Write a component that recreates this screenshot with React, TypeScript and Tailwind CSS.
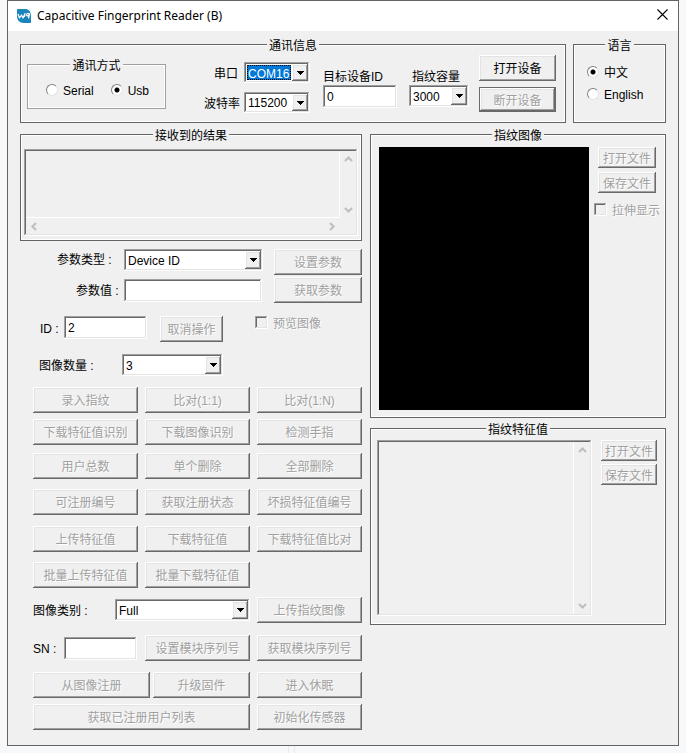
import type { ReactNode } from "react";
import { useState } from "react";
import { clsx } from "clsx";

const RAISED_CLASS =
  "shadow-[inset_-1px_-1px_0_#696969,inset_1px_1px_0_#fff,inset_-2px_-2px_0_#a0a0a0,inset_2px_2px_0_#e3e3e3]";
const SUNKEN_CLASS =
  "shadow-[inset_-1px_-1px_0_#fff,inset_1px_1px_0_#a0a0a0,inset_-2px_-2px_0_#e3e3e3,inset_2px_2px_0_#696969]";
const DISABLED_TEXT_CLASS = "text-[#a0a0a0] [text-shadow:1px_1px_0_#fff]";

type GroupProps = {
  readonly title: string;
  readonly light?: boolean;
  readonly className?: string;
  readonly children: ReactNode;
};

function Group({ title, light, className, children }: GroupProps) {
  return (
    <fieldset
      className={clsx(
        "min-w-0 border shadow-[inset_1px_1px_0_#fff,inset_-1px_-1px_0_#fff]",
        light ? "border-[#a0a0a0]" : "border-[#646464]",
        className,
      )}
    >
      <legend className="mx-auto h-5 bg-[#f0f0f0] px-0.5 pt-1 leading-4">{title}</legend>
      {children}
    </fieldset>
  );
}

type PushButtonProps = {
  readonly children: ReactNode;
  readonly enabled?: boolean;
  readonly className?: string;
};

function PushButton({ children, enabled, className }: PushButtonProps) {
  return (
    <button
      className={clsx(
        "min-w-0 bg-[#f0f0f0] pt-0.5 text-center whitespace-nowrap",
        RAISED_CLASS,
        !enabled && DISABLED_TEXT_CLASS,
        className ?? "h-[26px]",
      )}
      disabled={!enabled}
      type="button"
    >
      {children}
    </button>
  );
}

type ComboProps = {
  readonly id: string;
  readonly options: string[];
  readonly selected?: boolean;
  readonly className?: string;
};

function Combo({ id, options, selected, className }: ComboProps) {
  return (
    <div className={clsx("flex min-w-0 bg-white p-0.5", SUNKEN_CLASS, className ?? "h-[22px]")}>
      <select
        className={clsx(
          "min-w-0 flex-1 appearance-none rounded-none outline-none",
          selected ? "m-px border border-dotted border-black bg-[#0078d7] text-white" : "pt-px pl-0.5",
        )}
        id={id}
      >
        {options.map((option) => (
          <option key={option}>{option}</option>
        ))}
      </select>
      <span
        aria-hidden
        className={clsx("flex w-4 shrink-0 items-center justify-center bg-[#f0f0f0]", RAISED_CLASS)}
      >
        <svg className="h-1 w-[7px]" shapeRendering="crispEdges" viewBox="0 0 7 4">
          <path d="M0 0h7v1h-1v1h-1v1h-1v1h-1v-1h-1v-1h-1v-1h-1z" />
        </svg>
      </span>
    </div>
  );
}

type TextBoxProps = {
  readonly id: string;
  readonly initial?: string;
  readonly className?: string;
};

function TextBox({ id, initial = "", className }: TextBoxProps) {
  return (
    <input
      className={clsx("h-[23px] min-w-0 bg-white px-1 outline-none", SUNKEN_CLASS, className)}
      defaultValue={initial}
      id={id}
      type="text"
    />
  );
}

type RadioProps = {
  readonly name: string;
  readonly label: string;
  readonly checked: boolean;
  readonly onSelect: () => void;
};

function Radio({ name, label, checked, onSelect }: RadioProps) {
  return (
    <label className="flex h-4 items-center gap-[5px]">
      <input
        checked={checked}
        className="-mt-0.5 size-3 shrink-0 appearance-none rounded-full border border-t-[#808080] border-r-[#e3e3e3] border-b-[#e3e3e3] border-l-[#808080] bg-white checked:bg-[radial-gradient(circle,#000_2px,#fff_3px)]"
        name={name}
        onChange={onSelect}
        type="radio"
      />
      {label}
    </label>
  );
}

function CheckBox({ label }: { readonly label: string }) {
  return (
    <label className={clsx("flex h-4 items-center gap-[5px] whitespace-nowrap", DISABLED_TEXT_CLASS)}>
      <input
        className={clsx("-mt-1 size-[13px] shrink-0 appearance-none bg-[#f0f0f0]", SUNKEN_CLASS)}
        disabled
        type="checkbox"
      />
      <span>{label}</span>
    </label>
  );
}

const CHEVRONS = {
  up: "M1 6L4.500 2.500L8 6",
  down: "M1 3L4.500 6.500L8 3",
  left: "M6 1L2.500 4.500L6 8",
  right: "M3 1L6.500 4.500L3 8",
};

function Chevron({ dir }: { readonly dir: keyof typeof CHEVRONS }) {
  return (
    <svg aria-hidden className="size-[9px]" viewBox="0 0 9 9">
      <path d={CHEVRONS[dir]} fill="none" stroke="#bfbfbf" strokeWidth="2.200" />
    </svg>
  );
}

/** Disabled multi-line box with its scroll bars drawn in place. */
function ScrollText({
  label,
  horizontal,
  className,
}: {
  readonly label: string;
  readonly horizontal?: boolean;
  readonly className?: string;
}) {
  return (
    <div className={clsx("flex min-w-0 flex-col p-0.5", SUNKEN_CLASS, className)}>
      <div className="flex min-h-0 flex-1">
        <textarea
          aria-label={label}
          className={clsx(
            "w-0 min-w-0 flex-1 resize-none overflow-hidden border-r border-white",
            horizontal && "border-b",
          )}
          disabled
        />
        <div className="flex w-4 flex-col items-center justify-between py-1">
          <Chevron dir="up" />
          <Chevron dir="down" />
        </div>
      </div>
      {horizontal ? (
        <div className="flex h-4 items-center justify-between pr-5 pl-1">
          <Chevron dir="left" />
          <Chevron dir="right" />
        </div>
      ) : null}
    </div>
  );
}

function Logo() {
  return (
    <svg aria-hidden className="h-[15px] w-[14px]" viewBox="0 0 14 15">
      <path d="M0 1Q0 0 1 0H9Q14 1 14 7V13Q14 14 13 14H6Q0 13 0 7Z" fill="#1b85ba" />
      <path
        d="M1 5L2.500 9L4.500 6L6 9L8 4.500L7.500 8M12.500 5Q10 3.500 9.500 6Q10 7.500 11.500 6.500L12.500 5L11.500 9.500"
        fill="none"
        stroke="#fff"
        strokeLinejoin="round"
        strokeWidth="1.200"
      />
    </svg>
  );
}

const ACTION_ROWS = [
  { className: "mt-[11px]", labels: ["录入指纹", "比对(1:1)", "比对(1:N)"] },
  { className: "mt-1.5", labels: ["下载特征值识别", "下载图像识别", "检测手指"] },
  { className: "mt-2", labels: ["用户总数", "单个删除", "全部删除"] },
  { className: "mt-2.5", labels: ["可注册编号", "获取注册状态", "坏损特征值编号"] },
  { className: "mt-[11px]", labels: ["上传特征值", "下载特征值", "下载特征值比对"] },
  { className: "mt-2.5", labels: ["批量上传特征值", "批量下载特征值"] },
];

function ConnectionGroup() {
  const [mode, setMode] = useState("Usb");

  return (
    <Group className="flex-1" title="通讯信息">
      <div className="flex h-[68px] items-start pr-[9px] pl-1.5">
        <Group className="h-[55px] w-[139px] shrink-0" light title="通讯方式">
          <div className="flex gap-[17px] pt-[9px] pl-[18px]">
            {["Serial", "Usb"].map((item) => (
              <Radio
                checked={mode === item}
                key={item}
                label={item}
                name="mode"
                onSelect={() => {
                  setMode(item);
                }}
              />
            ))}
          </div>
        </Group>
        <div className="mt-2 ml-auto grid grid-cols-[36px_66px] items-center gap-x-1 gap-y-[9px]">
          <label className="pt-0.5 pr-0.5 text-right" htmlFor="port">
            串口
          </label>
          <Combo className="h-[21px]" id="port" options={["COM16"]} selected />
          <label className="pt-0.5 text-right" htmlFor="baud">
            波特率
          </label>
          <Combo className="h-[21px]" id="baud" options={["115200"]} />
        </div>
        <div className="mt-3.5 ml-[13px] flex w-[74px] flex-col">
          <label className="h-[17px] pt-px whitespace-nowrap" htmlFor="target">
            目标设备ID
          </label>
          <TextBox id="target" initial="0" />
        </div>
        <div className="mt-3.5 ml-3 flex w-[60px] flex-col">
          <label className="h-[17px] pt-px pl-[3px] whitespace-nowrap" htmlFor="capacity">
            指纹容量
          </label>
          <Combo id="capacity" options={["3000"]} />
        </div>
        <div className="mt-px ml-2.5 flex w-[77px] flex-col gap-1.5">
          <PushButton enabled>打开设备</PushButton>
          <PushButton className="h-[25px] border border-[#696969]">断开设备</PushButton>
        </div>
      </div>
    </Group>
  );
}

function LanguageGroup() {
  const [language, setLanguage] = useState("中文");

  return (
    <Group className="w-[93px]" title="语言">
      <div className="flex flex-col gap-1.5 pt-[11px] pl-[13px]">
        {["中文", "English"].map((item) => (
          <Radio
            checked={language === item}
            key={item}
            label={item}
            name="language"
            onSelect={() => {
              setLanguage(item);
            }}
          />
        ))}
      </div>
    </Group>
  );
}

function Controls() {
  return (
    <div className="flex flex-col pl-[13px]">
      <div className="mt-2 flex items-start">
        <label className="w-[91px] shrink-0 pt-[3px] pl-6 whitespace-nowrap" htmlFor="param-type">
          参数类型 :
        </label>
        <Combo className="h-[22px] flex-1" id="param-type" options={["Device ID"]} />
        <PushButton className="ml-[11px] h-[26px] w-[88px]">设置参数</PushButton>
      </div>
      <div className="mt-0.5 flex items-center">
        <label className="w-[91px] shrink-0 pt-0.5 pl-[43px] whitespace-nowrap" htmlFor="param-value">
          参数值 :
        </label>
        <TextBox className="flex-1" id="param-value" />
        <PushButton className="ml-3 h-[26px] w-[88px]">获取参数</PushButton>
      </div>
      <div className="mt-[13px] flex items-start">
        <label className="w-[31px] shrink-0 pt-[5px] pl-[7px] whitespace-nowrap" htmlFor="user-id">
          ID :
        </label>
        <TextBox className="w-[83px]" id="user-id" initial="2" />
        <PushButton className="ml-[13px] h-[26px] w-[63px]">取消操作</PushButton>
        <div className="ml-8">
          <CheckBox label="预览图像" />
        </div>
      </div>
      <div className="mt-3 flex items-center">
        <label className="w-[89px] shrink-0 pt-0.5 pl-1.5" htmlFor="image-count">
          图像数量 :
        </label>
        <Combo className="h-[22px] w-[101px]" id="image-count" options={["3"]} />
      </div>
      {ACTION_ROWS.map((row) => (
        <div className={clsx("grid grid-cols-3 gap-[7px]", row.className)} key={row.labels[0]}>
          {row.labels.map((label) => (
            <PushButton key={label}>{label}</PushButton>
          ))}
        </div>
      ))}
      <div className="mt-[9px] grid grid-cols-3 items-center gap-[7px]">
        <div className="col-span-2 flex items-center">
          <label className="w-[82px] shrink-0 pt-0.5" htmlFor="image-kind">
            图像类别 :
          </label>
          <Combo className="h-[22px] flex-1" id="image-kind" options={["Full"]} />
        </div>
        <PushButton>上传指纹图像</PushButton>
      </div>
      <div className="mt-3 grid grid-cols-3 items-center gap-[7px]">
        <div className="flex items-center">
          <label className="w-[31px] shrink-0 pt-0.5" htmlFor="sn">
            SN :
          </label>
          <TextBox className="w-[73px]" id="sn" />
        </div>
        <PushButton>设置模块序列号</PushButton>
        <PushButton>获取模块序列号</PushButton>
      </div>
      <div className="mt-[11px] grid grid-cols-3 gap-[7px]">
        <div className="col-span-2 grid grid-cols-[117fr_97fr] gap-[3px]">
          <PushButton>从图像注册</PushButton>
          <PushButton>升级固件</PushButton>
        </div>
        <PushButton>进入休眠</PushButton>
      </div>
      <div className="mt-1.5 grid grid-cols-3 gap-[7px]">
        <PushButton className="col-span-2 h-[26px]">获取已注册用户列表</PushButton>
        <PushButton>初始化传感器</PushButton>
      </div>
    </div>
  );
}

export default function App() {
  return (
    <div className="min-h-screen bg-[#f7f8fa] px-[7px] font-['Liberation_Sans','Noto_Sans_CJK_SC',sans-serif] text-xs text-black">
      <main className="border border-[#646464] bg-[#f0f0f0]">
        <header className="flex h-[30px] items-center bg-white pr-2.5 pl-[9px]">
          <Logo />
          <h1 className="ml-1.5 font-['Noto_Sans',sans-serif]">Capacitive Fingerprint Reader (B)</h1>
          <button aria-label="Close" className="mb-1 ml-auto" type="button">
            <svg className="size-[11px]" viewBox="0 0 11 11">
              <path d="M0.500 0.500L10.500 10.500M10.500 0.500L0.500 10.500" stroke="#000" strokeWidth="1.100" />
            </svg>
          </button>
        </header>
        <div className="px-3 pt-[3px] pb-[15px]">
          <div className="flex gap-[7px]">
            <ConnectionGroup />
            <LanguageGroup />
          </div>
          <div className="mt-px grid grid-cols-[342fr_296fr] gap-2">
            <div className="min-w-0">
              <Group title="接收到的结果">
                <ScrollText className="mx-[3px] mt-[5px] mb-1 h-[87px]" horizontal label="接收到的结果" />
              </Group>
              <Controls />
            </div>
            <div className="min-w-0">
              <Group title="指纹图像">
                <div className="flex items-start pt-[3px] pr-1 pb-[7px] pl-2">
                  <div className="h-[263px] flex-1 bg-black" />
                  <div className="ml-[5px] flex w-[67px] flex-col">
                    <PushButton className="ml-1 h-[21px] w-[58px]">打开文件</PushButton>
                    <PushButton className="mt-1 ml-1 h-[21px] w-[58px]">保存文件</PushButton>
                    <div className="mt-2.5">
                      <CheckBox label="拉伸显示" />
                    </div>
                  </div>
                </div>
              </Group>
              <Group title="指纹特征值">
                <div className="flex items-start pt-0.5 pr-2 pb-2 pl-1.5">
                  <ScrollText className="h-[176px] flex-1" label="指纹特征值" />
                  <div className="ml-[9px] flex w-14 flex-col gap-[3px]">
                    <PushButton className="h-[21px]">打开文件</PushButton>
                    <PushButton className="h-[21px]">保存文件</PushButton>
                  </div>
                </div>
              </Group>
            </div>
          </div>
        </div>
      </main>
      <div className="ml-[281px] h-[7px] w-[7px] border-x border-[#e8e9eb]" />
    </div>
  );
}
